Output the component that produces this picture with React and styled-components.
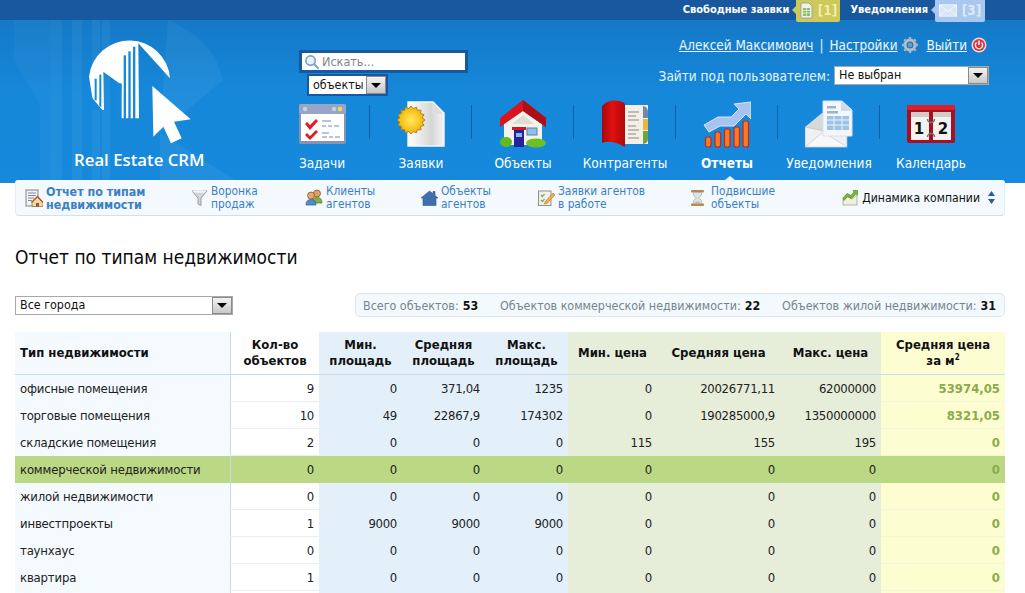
import React from 'react';
import styled, { createGlobalStyle } from 'styled-components';

const FONT = `"DejaVu Sans Condensed", "DejaVu Sans", Verdana, sans-serif`;

const GlobalStyle = createGlobalStyle`
    html, body {
        margin: 0;
        padding: 0;
        height: 100%;
        overflow: hidden;
        background: #fff;
    }
    body {
        font-family: ${FONT};
        font-size: 13px;
        color: #222;
    }
`;

/* ---------- top bar ---------- */

const TopBar = styled.div`
    height: 20px;
    background: #17589f;
    display: flex;
    justify-content: flex-end;
    padding-right: 40px;
    position: relative;
    z-index: 2;
`;

const TopLabel = styled.span`
    color: #fff;
    font-size: 11px;
    font-weight: bold;
    line-height: 19px;
    margin-right: 7px;
`;

const Badge = styled.div`
    height: 22px;
    width: ${({ $w }) => $w}px;
    margin-right: ${({ $mr }) => $mr}px;
    background: ${({ $bg }) => $bg};
    color: ${({ $fg }) => $fg};
    border-radius: 0 0 2px 2px;
    position: relative;
    display: flex;
    align-items: center;
    justify-content: center;
    gap: 5px;
    font-size: 13.5px;
    font-weight: bold;
    box-sizing: border-box;
    padding-bottom: 2px;

    &:before {
        content: '';
        position: absolute;
        left: -4px;
        top: 6px;
        border-style: solid;
        border-width: 4px 4px 4px 0;
        border-color: transparent ${({ $bg }) => $bg} transparent transparent;
    }
`;

/* ---------- header ---------- */

const Header = styled.header`
    height: 163px;
    background: linear-gradient(to bottom, #1479c7 0%, #1688da 45%, #1689dc 100%);
    display: flex;
    position: relative;
    overflow: hidden;
`;

const HeaderDecor = styled.svg`
    position: absolute;
    left: 0;
    top: 0;
    pointer-events: none;
`;

const LogoColumn = styled.div`
    width: 271px;
    flex: none;
    padding: 10px 0 0 70px;
    box-sizing: border-box;
    position: relative;
`;

const LogoText = styled.div`
    font-family: "Open Sans", sans-serif;
    font-weight: 600;
    font-size: 16.8px;
    line-height: 22px;
    color: #fff;
    margin: 1px 0 0 4px;
    white-space: nowrap;
`;

const HeaderMain = styled.div`
    flex: 1;
    display: flex;
    flex-direction: column;
    position: relative;
`;

const HeaderTop = styled.div`
    height: 80px;
    display: flex;
    justify-content: space-between;
    padding: 0 36px 0 28px;
`;

const SearchBlock = styled.div`
    padding-top: 30px;
`;

const SearchBox = styled.div`
    width: 169px;
    height: 23px;
    box-sizing: border-box;
    border: 3px solid #17589f;
    background: #fff;
    display: flex;
    align-items: center;
    gap: 2px;
    padding-left: 2px;
    color: #80868c;
    font-size: 12.5px;
`;

const SelectBox = styled.div`
    width: ${({ $w }) => $w}px;
    height: ${({ $h }) => $h || 19}px;
    box-sizing: border-box;
    border: ${({ $dark }) => ($dark ? '2px solid #17589f' : '1px solid #a9a9a9')};
    background: #fff;
    display: flex;
    align-items: center;
    justify-content: space-between;
    color: #111;
    font-size: 12.4px;
    margin-left: ${({ $ml }) => $ml || 0}px;
    margin-top: ${({ $mt }) => $mt || 0}px;
    padding-left: 4px;
    line-height: 1;
`;

const SelectArrow = styled.div`
    width: 20px;
    height: 100%;
    box-sizing: border-box;
    border: 1px solid #8a8a8a;
    background: linear-gradient(to bottom, #f2f2f2, #c8c8c8);
    display: flex;
    align-items: center;
    justify-content: center;

    &:after {
        content: '';
        border-style: solid;
        border-width: 5px 5px 0 5px;
        border-color: #000 transparent transparent transparent;
    }
`;

const UserBlock = styled.div`
    padding-top: 17px;
    display: flex;
    flex-direction: column;
    align-items: flex-end;
`;

const UserLinks = styled.div`
    display: flex;
    align-items: center;
    height: 16px;
    color: #e3f1fc;
    font-size: 13.4px;
    margin-right: 2px;
    gap: 4px;
`;

const UserLink = styled.a`
    color: #eef7fe;
    text-decoration: underline;
    margin-left: ${({ $ml }) => $ml || 0}px;
`;

const Pipe = styled.span`
    margin: 0 2px;
`;

const LoginAs = styled.div`
    display: flex;
    align-items: center;
    margin-top: 13px;
    color: #e8f4fd;
    font-size: 13.5px;
    gap: 4px;
`;

const Nav = styled.nav`
    display: flex;
    height: 83px;
`;

const NavItem = styled.a`
    width: 102px;
    box-sizing: border-box;
    display: flex;
    flex-direction: column;
    align-items: center;
    position: relative;
    color: #fff;
    font-size: 13.5px;
    font-weight: ${({ $active }) => ($active ? 'bold' : 'normal')};
    white-space: nowrap;

    &:first-child {
        width: 99px;
        padding-left: 3px;
    }

    &:not(:last-child):after {
        content: '';
        position: absolute;
        right: 0;
        top: 5px;
        height: 34px;
        width: 1px;
        background: #0f5fa3;
    }
`;

const NavLabel = styled.span`
    margin-top: 7px;
    line-height: 16px;
`;

/* ---------- sub navigation ---------- */

const SubNav = styled.div`
    margin: -3px 20px 0 15px;
    height: 36px;
    box-sizing: border-box;
    background: #f3f9fd;
    border-bottom: 1px solid #cfe0ee;
    border-left: 1px solid #e2edf5;
    border-right: 1px solid #e2edf5;
    border-radius: 3px 3px 4px 4px;
    display: flex;
    align-items: center;
    padding-left: 9px;
    position: relative;

    &:before {
        content: '';
        position: absolute;
        left: 709px;
        top: -4px;
        border-style: solid;
        border-width: 0 5px 4px 5px;
        border-color: transparent transparent #f3f9fd transparent;
    }
`;

const SubItem = styled.a`
    width: ${({ $w }) => $w}px;
    flex: none;
    display: flex;
    align-items: center;
    gap: ${({ $gap }) => $gap || 3}px;
    color: #3a80c2;
    font-size: ${({ $active }) => ($active ? '12.4px' : '11.8px')};
    line-height: 13px;
    font-weight: ${({ $active }) => ($active ? 'bold' : 'normal')};
`;

const SubRight = styled.div`
    margin-left: auto;
    margin-right: 9px;
    display: flex;
    align-items: center;
    gap: 4px;
    color: #111;
    font-size: 12.1px;
`;

const SortArrows = styled.svg`
    margin-left: 4px;
`;

/* ---------- page content ---------- */

const Content = styled.main`
    padding: 0 20px 0 15px;
`;

const Title = styled.h1`
    margin: 29px 0 0 0;
    font-size: 19px;
    line-height: 24px;
    font-weight: normal;
    color: #0a0a0a;
`;

const FilterRow = styled.div`
    display: flex;
    justify-content: space-between;
    align-items: center;
    margin-top: 24px;
`;

const Totals = styled.div`
    width: 650px;
    height: 24px;
    box-sizing: border-box;
    background: #f3f9fd;
    border: 1px solid #d9e8f3;
    border-radius: 5px;
    display: flex;
    align-items: center;
    justify-content: space-between;
    padding: 0 8px 0 7px;
    color: #76848e;
    font-size: 12.4px;
    white-space: nowrap;

    b {
        color: #111;
        margin-left: 4px;
    }
`;

const Table = styled.table`
    width: 990px;
    margin-top: 15px;
    border-collapse: separate;
    border-spacing: 0;
    table-layout: fixed;
`;

const toneBg = {
    name: '#f4fafe',
    count: '#ffffff',
    area: '#e3f0fa',
    price: '#e6edd9',
    avg: '#fdfdd2',
};

const lineColor = {
    name: '#f4fafe',
    count: '#e8f0f6',
    area: '#e3f0fa',
    price: '#e6edd9',
    avg: '#f4f6d8',
};

const Th = styled.th`
    height: 43px;
    padding: 0 2px;
    box-sizing: border-box;
    font-size: 13px;
    line-height: 16px;
    font-weight: bold;
    color: #111;
    text-align: ${({ $left }) => ($left ? 'left' : 'center')};
    padding-left: ${({ $left }) => ($left ? '5px' : '2px')};
    background: ${({ $tone }) => toneBg[$tone]};
    border-bottom: 1px solid #c9deed;
    border-right: ${({ $tone }) => ($tone === 'name' ? '1px solid #c3dbec' : '0')};

    sup {
        font-size: 8px;
        line-height: 0;
    }
`;

const Td = styled.td`
    height: 27px;
    padding: 0 5px;
    box-sizing: border-box;
    font-size: 13px;
    letter-spacing: ${({ $tone }) => ($tone === 'name' ? '-0.18px' : $tone === 'avg' ? '0' : '-0.3px')};
    color: #222;
    text-align: ${({ $tone }) => ($tone === 'name' ? 'left' : 'right')};
    background: ${({ $tone, $total }) => ($total ? '#bbd884' : toneBg[$tone])};
    border-bottom: 1px solid ${({ $tone, $total }) => ($total ? '#bbd884' : lineColor[$tone])};
    border-right: ${({ $tone }) => ($tone === 'name' ? '1px solid #c3dbec' : '0')};
    white-space: nowrap;
    font-weight: ${({ $tone }) => ($tone === 'avg' ? 'bold' : 'normal')};
    ${({ $tone }) => $tone === 'avg' && 'color: #8bab4c;'}
`;

/* ---------- icons ---------- */

const LogoMark = () => (
    <svg width="140" height="115" viewBox="0 0 420 345">
        <path fill="#fff" d="M57 140 A122 122 0 0 1 300 145 L205 40 L207 265 L148 265 L155 165 L100 125 L102 240 L96 240 L67 205 L62 172 Z" />
        <g fill="#1689dc">
            <rect x="161" y="76" width="7" height="195" />
            <rect x="175" y="64" width="7" height="205" />
            <rect x="189" y="50" width="7" height="218" />
            <rect x="74" y="146" width="6" height="65" />
            <rect x="88" y="134" width="6" height="96" />
            <rect x="140" y="160" width="15" height="110" />
            <path d="M96 240 L60 240 L60 175 L67 205 Z" />
        </g>
        <path fill="#fff" d="M247 168 L362 268 L312 275 L335 325 L303 340 L280 290 L250 320 Z" />
    </svg>
);

const TaskIcon = () => (
    <svg width="48" height="48" viewBox="0 0 48 48">
        <rect x="1" y="4" width="47" height="40" rx="2" fill="#8593b8" />
        <rect x="1" y="4" width="47" height="10" rx="2" fill="#98a5c6" />
        <circle cx="7" cy="9" r="2.2" fill="#c7cfe2" />
        <circle cx="36" cy="9" r="2.2" fill="#c7cfe2" />
        <circle cx="42" cy="9" r="2.2" fill="#eedc4a" />
        <rect x="3" y="14" width="43" height="27" fill="#fff" />
        <path d="M9 22 l3 3 l6 -6 l2 2 l-8 9 l-5 -6 z" fill="#e01c24" />
        <path d="M9 33 l3 3 l6 -6 l2 2 l-8 8 l-5 -5 z" fill="#e01c24" />
        <path d="M24 21 h9 M24 26 h4 M30 26 h4 M36 26 h5 M24 33 h7 M24 37 h5 M31 37 h4 M37 37 h5" stroke="#9fb2cf" strokeWidth="1.6" />
    </svg>
);

const starPoints = Array.from({ length: 32 }, (_, i) => {
    const r = i % 2 ? 11.5 : 14;
    const a = (i * Math.PI) / 16;
    return `${(14 + r * Math.cos(a)).toFixed(1)},${(20 + r * Math.sin(a)).toFixed(1)}`;
}).join(' ');

const RequestIcon = () => (
    <svg width="48" height="48" viewBox="0 0 48 48">
        <defs>
            <linearGradient id="pg" x1="0" x2="1" y1="0" y2="0">
                <stop offset="0" stopColor="#fff" />
                <stop offset="0.65" stopColor="#d6d6d6" />
                <stop offset="1" stopColor="#f4f4f4" />
            </linearGradient>
            <radialGradient id="sun">
                <stop offset="0" stopColor="#ffe860" />
                <stop offset="1" stopColor="#f0b400" />
            </radialGradient>
        </defs>
        <path d="M11 2 H36 L47 13 V46 H11 Z" fill="url(#pg)" stroke="#f5f8fb" strokeWidth="1.4" />
        <path d="M35 3 L46 14 H35 Z" fill="#dedede" />
        <polygon points={starPoints} fill="url(#sun)" stroke="#b67e28" strokeWidth="1" />
    </svg>
);

const HouseIcon = () => (
    <svg width="48" height="48" viewBox="0 0 48 48">
        <path d="M5 20 L24 6 L43 20 V45 H5 Z" fill="#f4f2ec" />
        <path d="M13 24 L24 15 L35 24 Z" fill="#dfdcd2" />
        <ellipse cx="7" cy="42" rx="6" ry="5" fill="#62bb1e" />
        <ellipse cx="37" cy="43" rx="10" ry="4.500" fill="#6cc024" />
        <path d="M1 18 L24 0 L47 18 V27 L24 11 L1 27 Z" fill="#d8141e" />
        <path d="M24 0 L47 18 V27 L24 11 Z" fill="#ab0f18" />
        <rect x="13" y="27" width="14" height="3" fill="#d8141e" />
        <rect x="15" y="30" width="10" height="17" fill="#23249a" />
        <rect x="17" y="33" width="6" height="4" fill="#8fb7e4" />
        <rect x="28" y="28" width="10" height="7" fill="#8fc0ea" stroke="#5c7c9f" />
    </svg>
);

const BookIcon = () => (
    <svg width="48" height="48" viewBox="0 0 48 48">
        <defs>
            <linearGradient id="cover" x1="0" x2="1" y1="0" y2="0">
                <stop offset="0" stopColor="#a40808" />
                <stop offset="0.45" stopColor="#e01010" />
                <stop offset="1" stopColor="#b00a0a" />
            </linearGradient>
        </defs>
        <rect x="22" y="5" width="25" height="39" fill="#f2efe6" />
        <path d="M42 6 a5 6 0 0 1 5 6 v6 h-5 z" fill="#6d88a8" />
        <path d="M42 19 h5 v11 h-5 z" fill="#e9b640" />
        <path d="M42 31 h5 v8 a5 5 0 0 1 -5 5 z" fill="#6fa63c" />
        <path d="M27 12 h11 M27 16 h8 M27 20 h11 M27 26 h8 M27 30 h11 M27 34 h8 M27 38 h11" stroke="#8a8a84" strokeWidth="1" />
        <path d="M1 6 Q8 -1 18 1 Q24 2 24 5 V47 L18 44 Q8 40 1 43 Z" fill="url(#cover)" />
    </svg>
);

const ReportIcon = () => (
    <svg width="48" height="48" viewBox="0 0 48 48">
        <path d="M1 25 L15 17 H28 L36 9 L31 4 L48 2 V19 L43 14 L31 26 H17 L6 32 Z" fill="#a9c2ee" stroke="#dbe6fa" strokeWidth="1" />
        <g fill="#f97a22" stroke="#c1271a" strokeWidth="1.2">
            <rect x="2.500" y="37" width="5.500" height="10" rx="2" />
            <rect x="12" y="32" width="5.500" height="15" rx="2" />
            <rect x="21.500" y="29" width="5.500" height="18" rx="2" />
            <rect x="31" y="27" width="5.500" height="20" rx="2" />
            <rect x="40" y="21" width="5.500" height="26" rx="2" />
        </g>
    </svg>
);

const MailDocIcon = () => (
    <svg width="48" height="48" viewBox="0 0 48 48">
        <path d="M0 27 L17 13 H24 V47 H0 Z" fill="#d6d8dc" />
        <path d="M0 27 V47 H42 V36 Z" fill="#eef0f2" stroke="#b5b8bc" strokeWidth=".6" />
        <path d="M0 47 L18 32 L42 47 Z" fill="#f8f8f8" stroke="#c0c2c6" strokeWidth=".6" />
        <path d="M18 1 H37 L47 10 V36 H18 Z" fill="#f3f7fc" stroke="#d9e2ee" strokeWidth="1" />
        <path d="M36 1 L47 11 H36 Z" fill="#cfdbea" />
        <rect x="22" y="6" width="9" height="2.500" fill="#9eb3c9" />
        <rect x="22" y="11" width="11" height="2.500" fill="#9eb3c9" />
        <rect x="22" y="16" width="22" height="14" fill="#9cc3e4" />
        <path d="M22 20 h22 M22 25 h22 M29 16 v14 M37 16 v14" stroke="#eef6fc" strokeWidth="1" />
    </svg>
);

const CalendarDigit = styled.text`
    font-family: "DejaVu Sans", sans-serif;
    font-weight: bold;
    font-size: 15px;
    fill: #111;
    text-anchor: middle;
`;

const CalendarIcon = () => (
    <svg width="48" height="48" viewBox="0 0 48 48">
        <rect x="0" y="5" width="48" height="38" rx="2" fill="#a81022" />
        <rect x="0" y="5" width="48" height="5" rx="2" fill="#d9202c" />
        <rect x="4" y="12" width="40" height="28" fill="#f4f2ee" />
        <rect x="4" y="12" width="40" height="5" fill="#cfcdc6" />
        <rect x="22" y="10" width="4" height="30" fill="#a81022" />
        <path d="M20.500 19 a3.500 3.500 0 0 0 7 0 M20.500 37 a3.500 3.500 0 0 1 7 0" fill="none" stroke="#767676" strokeWidth="1.600" />
        <CalendarDigit x="12" y="34">1</CalendarDigit>
        <CalendarDigit x="36" y="34">2</CalendarDigit>
    </svg>
);

const SearchIcon = () => (
    <svg width="16" height="16" viewBox="0 0 17 17">
        <circle cx="7" cy="7" r="5" fill="#e8f1f9" stroke="#7fa3c6" strokeWidth="1.800" />
        <path d="M10.800 10.800 L15 15" stroke="#7fa3c6" strokeWidth="2.200" strokeLinecap="round" />
    </svg>
);

const SheetIcon = () => (
    <svg width="13" height="17" viewBox="0 0 13 17">
        <path d="M1 1 H9 L12 4 V16 H1 Z" fill="#eef3e8" stroke="#8d9a9c" strokeWidth=".8" />
        <rect x="3" y="6" width="7" height="8" fill="#8abf6a" />
        <path d="M3 8.500 h7 M3 11 h7 M6.500 6 v8" stroke="#eef3e8" strokeWidth=".7" />
    </svg>
);

const EnvelopeIcon = () => (
    <svg width="18" height="13" viewBox="0 0 19 13">
        <rect x=".5" y=".5" width="18" height="12" fill="#d6e5f8" stroke="#f0f6fd" />
        <path d="M1 1 L9.500 7.500 L18 1 M1 12 L7 6 M18 12 L12 6" fill="none" stroke="#f4f8fd" strokeWidth="1" />
    </svg>
);

const GearIcon = () => (
    <svg width="16" height="16" viewBox="0 0 16 16">
        <circle cx="8" cy="8" r="5" fill="none" stroke="#b5bec6" strokeWidth="3" />
        <path d="M8 0 v3 M8 13 v3 M0 8 h3 M13 8 h3 M2.300 2.300 l2 2 M11.700 11.700 l2 2 M13.700 2.300 l-2 2 M4.300 11.700 l-2 2" stroke="#aab4bc" strokeWidth="2.400" />
        <circle cx="8" cy="8" r="2.200" fill="#7d95a8" />
    </svg>
);

const PowerIcon = () => (
    <svg width="16" height="16" viewBox="0 0 16 16">
        <circle cx="8" cy="8" r="7.500" fill="#f3d7d8" />
        <circle cx="8" cy="8" r="6" fill="#d9343c" />
        <path d="M5.500 5.500 A3.600 3.600 0 1 0 10.500 5.500" fill="none" stroke="#fff" strokeWidth="1.300" />
        <path d="M8 3.500 V8" stroke="#fff" strokeWidth="1.400" />
    </svg>
);

const ReportTypeIcon = () => (
    <svg width="18" height="18" viewBox="0 0 18 18">
        <rect x="1" y="1" width="12" height="16" fill="#f1f3f5" stroke="#7d8790" />
        <path d="M3 4 h8 M3 6.500 h8 M3 9 h6 M3 11.500 h4" stroke="#7f8b96" />
        <path d="M7 13 L12.500 8 L18 13 V17.500 H7 Z" fill="#efd9a8" stroke="#8a6d3a" strokeWidth=".7" />
        <path d="M6.500 13.500 L12.500 7.500 L18 13.500" fill="none" stroke="#b5531c" strokeWidth="1.300" />
        <rect x="11" y="14" width="3" height="3.500" fill="#8a5a2a" />
    </svg>
);

const FunnelIcon = () => (
    <svg width="17" height="18" viewBox="0 0 17 18">
        <path d="M1 2 H16 L10 9 V16.500 L7 15 V9 Z" fill="#d2d6d8" stroke="#8f979c" strokeWidth=".9" />
        <ellipse cx="8.500" cy="2.500" rx="7" ry="1.300" fill="#f2f4f5" />
    </svg>
);

const AgentsIcon = () => (
    <svg width="18" height="17" viewBox="0 0 18 17">
        <circle cx="12" cy="4.500" r="3.500" fill="#e0a060" stroke="#7a4a20" strokeWidth=".7" />
        <path d="M7 14 Q7 8.500 12 8.500 Q17 8.500 17 14 Z" fill="#7cb342" stroke="#4c7c22" strokeWidth=".7" />
        <circle cx="6" cy="6.500" r="3.500" fill="#e8a868" stroke="#7a4a20" strokeWidth=".7" />
        <path d="M1 16 Q1 10.500 6 10.500 Q11 10.500 11 16 Z" fill="#4c8cd0" stroke="#2a5c98" strokeWidth=".7" />
    </svg>
);

const BlueHouseIcon = () => (
    <svg width="17" height="16" viewBox="0 0 17 16">
        <path d="M0 8 L8.500 1 L12 3.800 V1.500 H14 V5.500 L17 8 L15 8 V15.500 H2 V8 Z" fill="#3f70ab" stroke="#2b5588" strokeWidth=".6" />
    </svg>
);

const NoteIcon = () => (
    <svg width="17" height="17" viewBox="0 0 17 17">
        <rect x=".5" y="2" width="12.500" height="14.500" fill="#f0efe8" stroke="#92928a" />
        <path d="M3 6 l1.500 1.500 l2 -2.500 M3 11 l1.500 1.500 l2 -2.500" fill="none" stroke="#6ba040" strokeWidth="1.100" />
        <path d="M7 13 L15 4 L17 5.800 L9 14.500 L6.500 15 Z" fill="#f2b04c" stroke="#a87628" strokeWidth=".6" />
    </svg>
);

const HourglassIcon = () => (
    <svg width="15" height="18" viewBox="0 0 15 18">
        <rect x="1" y="1" width="13" height="2.500" rx="1" fill="#b28a50" />
        <rect x="1" y="14.500" width="13" height="2.500" rx="1" fill="#b28a50" />
        <path d="M3 3.500 H12 Q12 7.500 8.500 9 Q12 10.500 12 14.500 H3 Q3 10.500 6.500 9 Q3 7.500 3 3.500 Z" fill="#dfe4e8" stroke="#9aa4ac" strokeWidth=".6" />
        <path d="M4.500 14 Q7.500 10.500 10.500 14 Z" fill="#d8b478" />
    </svg>
);

const DynamicsIcon = () => (
    <svg width="16" height="16" viewBox="0 0 16 16">
        <path d="M1 8 V15 H15 V5 L10 9 L6 7 Z" fill="#f0efe2" stroke="#9c9c88" strokeWidth=".7" />
        <path d="M1 8 L5 3.500 L9 5.500 L12 2 L11 .5 H15.500 V5 L14 3.800 L9.500 8.500 L5.500 6.500 L2 10.500 Z" fill="#78ba2e" stroke="#477c14" strokeWidth=".6" />
    </svg>
);

/* ---------- data ---------- */

const navItems = [
    { label: 'Задачи', Icon: TaskIcon },
    { label: 'Заявки', Icon: RequestIcon },
    { label: 'Объекты', Icon: HouseIcon },
    { label: 'Контрагенты', Icon: BookIcon },
    { label: 'Отчеты', Icon: ReportIcon, active: true },
    { label: 'Уведомления', Icon: MailDocIcon },
    { label: 'Календарь', Icon: CalendarIcon },
];

const subItems = [
    { lines: ['Отчет по типам', 'недвижимости'], Icon: ReportTypeIcon, w: 166, active: true },
    { lines: ['Воронка', 'продаж'], Icon: FunnelIcon, w: 114 },
    { lines: ['Клиенты', 'агентов'], Icon: AgentsIcon, w: 116 },
    { lines: ['Объекты', 'агентов'], Icon: BlueHouseIcon, w: 117 },
    { lines: ['Заявки агентов', 'в работе'], Icon: NoteIcon, w: 152 },
    { lines: ['Подвисшие', 'объекты'], Icon: HourglassIcon, w: 140, gap: 6 },
];

const columns = [
    { tone: 'name', w: 216 },
    { tone: 'count', w: 88 },
    { tone: 'area', w: 83 },
    { tone: 'area', w: 83 },
    { tone: 'area', w: 83 },
    { tone: 'price', w: 89 },
    { tone: 'price', w: 123 },
    { tone: 'price', w: 101 },
    { tone: 'avg', w: 124 },
];

const rows = [
    ['офисные помещения', '9', '0', '371,04', '1235', '0', '20026771,11', '62000000', '53974,05'],
    ['торговые помещения', '10', '49', '22867,9', '174302', '0', '190285000,9', '1350000000', '8321,05'],
    ['складские помещения', '2', '0', '0', '0', '115', '155', '195', '0'],
    ['коммерческой недвижимости', '0', '0', '0', '0', '0', '0', '0', '0'],
    ['жилой недвижимости', '0', '0', '0', '0', '0', '0', '0', '0'],
    ['инвестпроекты', '1', '9000', '9000', '9000', '0', '0', '0', '0'],
    ['таунхаус', '0', '0', '0', '0', '0', '0', '0', '0'],
    ['квартира', '1', '0', '0', '0', '0', '0', '0', '0'],
    ['', '', '', '', '', '', '', '', ''],
];

const App = () => {
    return (
        <>
            <GlobalStyle />
            <TopBar>
                <TopLabel>Свободные заявки</TopLabel>
                <Badge $w={44} $mr={10} $bg="#cdc95a" $fg="#f2efa8"><SheetIcon />[1]</Badge>
                <TopLabel>Уведомления</TopLabel>
                <Badge $w={50} $mr={0} $bg="#a8c8f0" $fg="#dceafb"><EnvelopeIcon />[3]</Badge>
            </TopBar>
            <Header>
                <HeaderDecor width="300" height="163" viewBox="0 0 300 163">
                    <path d="M14 0 V40 L40 85 V163 H50 V0 Z" fill="#fff" opacity="0.03" />
                    <path d="M50 0 H62 V163 H50 Z M72 0 H82 V163 H72 Z M92 0 H100 V163 H92 Z M102 0 H110 V163 H102 Z" fill="#fff" opacity="0.05" />
                    <path d="M168 0 Q215 20 223 60 L160 113 L240 163 H160 V113 Z" fill="#fff" opacity="0.05" />
                </HeaderDecor>
                <LogoColumn>
                    <LogoMark />
                    <LogoText>Real Estate CRM</LogoText>
                </LogoColumn>
                <HeaderMain>
                    <HeaderTop>
                        <SearchBlock>
                            <SearchBox><SearchIcon />Искать...</SearchBox>
                            <SelectBox $w={81} $h={22} $dark $ml={8} $mt={1}>объекты<SelectArrow /></SelectBox>
                        </SearchBlock>
                        <UserBlock>
                            <UserLinks>
                                <UserLink>Алексей Максимович</UserLink>
                                <Pipe>|</Pipe>
                                <UserLink>Настройки</UserLink>
                                <GearIcon />
                                <UserLink $ml={5}>Выйти</UserLink>
                                <PowerIcon />
                            </UserLinks>
                            <LoginAs>
                                Зайти под пользователем:
                                <SelectBox $w={155}>Не выбран<SelectArrow /></SelectBox>
                            </LoginAs>
                        </UserBlock>
                    </HeaderTop>
                    <Nav>
                        {navItems.map(({ label, Icon, active }) => (
                            <NavItem key={label} $active={active}>
                                <Icon />
                                <NavLabel>{label}</NavLabel>
                            </NavItem>
                        ))}
                    </Nav>
                </HeaderMain>
            </Header>
            <SubNav>
                {subItems.map(({ lines, Icon, w, active, gap }) => (
                    <SubItem key={lines[0]} $w={w} $active={active} $gap={gap}>
                        <Icon />
                        <span>{lines[0]}<br />{lines[1]}</span>
                    </SubItem>
                ))}
                <SubRight>
                    <DynamicsIcon />
                    Динамика компании
                    <SortArrows width="7" height="13" viewBox="0 0 7 13">
                        <path d="M3.500 0 L7 5 H0 Z M0 8 H7 L3.500 13 Z" fill="#2c5c9c" />
                    </SortArrows>
                </SubRight>
            </SubNav>
            <Content>
                <Title>Отчет по типам недвижимости</Title>
                <FilterRow>
                    <SelectBox $w={218} $mt={1}>Все города<SelectArrow /></SelectBox>
                    <Totals>
                        <span>Всего объектов:<b>53</b></span>
                        <span>Объектов коммерческой недвижимости:<b>22</b></span>
                        <span>Объектов жилой недвижимости:<b>31</b></span>
                    </Totals>
                </FilterRow>
                <Table>
                    <colgroup>
                        {columns.map((c, i) => <col key={i} width={c.w} />)}
                    </colgroup>
                    <thead>
                        <tr>
                            <Th $tone="name" $left>Тип недвижимости</Th>
                            <Th $tone="count">Кол-во<br />объектов</Th>
                            <Th $tone="area">Мин.<br />площадь</Th>
                            <Th $tone="area">Средняя<br />площадь</Th>
                            <Th $tone="area">Макс.<br />площадь</Th>
                            <Th $tone="price">Мин. цена</Th>
                            <Th $tone="price">Средняя цена</Th>
                            <Th $tone="price">Макс. цена</Th>
                            <Th $tone="avg">Средняя цена<br />за м<sup>2</sup></Th>
                        </tr>
                    </thead>
                    <tbody>
                        {rows.map((row, r) => (
                            <tr key={r}>
                                {row.map((val, c) => (
                                    <Td key={c} $tone={columns[c].tone} $total={r === 3}>{val}</Td>
                                ))}
                            </tr>
                        ))}
                    </tbody>
                </Table>
            </Content>
        </>
    );
};

export default App;
